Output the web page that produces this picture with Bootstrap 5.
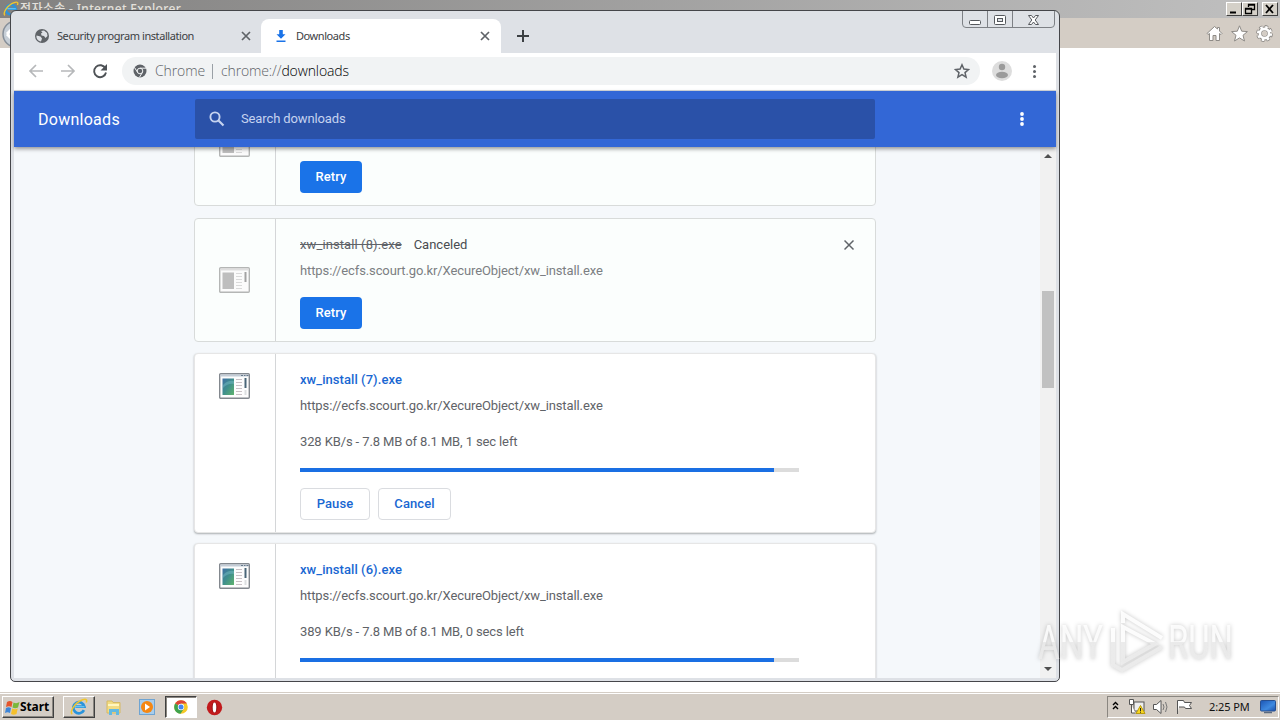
<!DOCTYPE html>
<html lang="en">
<head>
    <meta charset="UTF-8">
    <meta name="viewport" content="width=device-width, initial-scale=1.0">
    <title>Downloads</title>
    <link rel="stylesheet" href="https://cdn.jsdelivr.net/npm/bootstrap@5.3.0/dist/css/bootstrap.min.css">
    <style>
        body { width: 1280px; height: 720px; overflow: hidden; background: #fff; font-family: Roboto, "Liberation Sans", sans-serif; font-size: 13px; line-height: 20px; }
        svg { display: block; flex: none; }
        .desktop { height: 720px; }

        /* Internet Explorer behind */
        .ie-title { height: 18px; background: linear-gradient(90deg, #828180, #c0c0c0); color: #e4e1dc; font: 500 12px/18px "Noto Sans", "Noto Sans CJK KR", sans-serif; padding: 0 2px 0 3px; }
        .ie-caption { letter-spacing: .35px; white-space: nowrap; margin-left: 1px; }
        .ie-tools { height: 30px; background: #d4cdc5; padding: 2px 7px 0 1px; }
        .classic-btns { padding-top: 2px; }
        .classic-btn { width: 16px; height: 14px; background: #d4d0c8; border: 1px solid; border-color: #fff #404040 #404040 #fff; }
        .ie-icons { padding-top: 3px; }

        /* Chrome window */
        .chrome-win { left: 10px; top: 10px; width: 1050px; height: 672px; background: #dee1e6; border: 1px solid #45464a; border-radius: 6px 6px 5px 5px; padding: 0 3px 3px; overflow: hidden; }
        .tab-strip { height: 42px; padding: 8px 0 0 7px; font: 11px/34px "Noto Sans", sans-serif; color: #3c4043; letter-spacing: -.43px; }
        .tab-item { width: 240px; height: 34px; padding: 0 11px 0 15px; }
        .tab-item.on { background: #fff; border-radius: 8px 8px 0 0; }
        .tab-left { padding: 0 10px 0 14px; }
        .tab-two { margin-left: 2px; }
        .tab-plus { margin-top: 10px; }
        .win-buttons { right: 1px; top: -1px; width: 93px; height: 18px; border: 1px solid #7d8085; border-radius: 0 0 4px 4px; }
        .win-buttons > span + span { border-left: 1px solid #7d8085; }
        .address-row { height: 38px; background: #fff; border-bottom: 1px solid #d5d8dc; padding: 4px 15px 0 14px; }
        .omnibox { width: 858px; height: 28px; margin-left: 14px; border-radius: 14px; background: #f1f3f4; padding: 0 10px 0 11px; font: 300 14px/26px "Open Sans", sans-serif; color: #5f6368; letter-spacing: -.12px; }
        .omni-split { width: 1px; height: 15px; background: #9aa0a6; margin: 0 8px 0 7px; }
        .profile-pic { margin-right: 21px; }
        .dl-header { height: 56px; background: #3367d6; color: #fff; box-shadow: 0 2px 4px rgba(0,0,0,.4); position: relative; z-index: 2; }
        .dl-header h1 { width: 181px; padding: 2px 0 0 24px; margin: 0; font-size: 16px; font-weight: 400; letter-spacing: .27px; line-height: 54px; }
        .dl-search { width: 680px; height: 40px; background: #2a51a8; border-radius: 2px; padding-left: 14px; color: #c5d3f0; letter-spacing: -.12px; }
        .dl-menu { margin-right: 30px; }
        .dl-page { height: 531px; background: #f5f8fb; overflow: hidden; }
        .dl-list { width: 682px; margin: -65px 0 0 180px; }

        /* download entries */
        .dl-card { background: #fff; border: 1px solid #e6e6e6; border-radius: 4px; box-shadow: 0 1px 2px rgba(60,64,67,.4); margin-bottom: 11px; flex: none; }
        .dl-card.is-off { background: #fbfefd; border-color: #d8dbda; box-shadow: none; }
        .dl-card.gap-more { height: 124px; margin-bottom: 12px; }
        .dl-card.gap-less { margin-bottom: 10px; }
        .dl-card.last-one { height: 180px; }
        .dl-thumb { width: 81px; border-right: 1px solid #d4d6d8; padding: 19px 24px; }
        .dl-info { padding: 16px 20px 12px 24px; color: #5f6368; }
        .dl-name { font-weight: 500; color: #1967d2; letter-spacing: .06px; }
        .is-off .dl-name { font-weight: 400; color: #5f6368; text-decoration: line-through; letter-spacing: .1px; }
        .dl-state { color: #494c50; margin-left: 12px; }
        .dl-url { margin-top: 6px; letter-spacing: -.11px; }
        .is-off .dl-url { color: #7b7f83; }
        .dl-speed { margin-top: 16px; letter-spacing: -.12px; }
        .dl-info .progress { width: 499px; height: 4px; margin-top: 16px; border-radius: 0; background: #dcdcdc; }
        .progress-bar { background: #1a6fe3; }
        .dl-btns { margin-top: 16px; }
        .dl-btns .btn { height: 32px; padding: 0; font-size: 13px; font-weight: 500; line-height: 30px; border-radius: 4px; letter-spacing: .1px; }
        .btn-retry { width: 62px; background: #1a73e8; color: #fff; }
        .btn-pause { width: 70px; border-color: #dadce0; color: #1967d2; }
        .btn-stop { width: 73px; border-color: #dadce0; color: #1967d2; }
        .scroll-track { width: 16px; background: #f1f1f1; padding: 6px 0; }
        .scroll-thumb { width: 12px; height: 97px; margin-top: 132px; background: #c1c1c1; }

        /* taskbar */
        .task-bar { left: 0; top: 692px; width: 1280px; height: 28px; background: #d4cdc5; border-top: 1px solid #d4cdc5; box-shadow: inset 0 1px #fff; padding: 3px 1px 2px 2px; }
        .start-btn, .task-btn { height: 22px; border: 1px solid; border-color: #fff #404040 #404040 #fff; box-shadow: inset -1px -1px #8a8680; }
        .start-btn { width: 52px; font: 700 12px/20px "Noto Sans", sans-serif; color: #000; padding-left: 2px; letter-spacing: -.1px; }
        .task-btn { width: 32px; }
        .task-btn.first-task { margin-left: 9px; }
        .task-btn.on { background: #fff; border-color: #404040 #fff #fff #404040; box-shadow: inset 1px 1px #8a8680; }
        .quick-icons { margin: 0 10px 0 9px; gap: 15px; }
        .opera-icon { margin-left: 9px; }
        .tray { width: 172px; height: 22px; border: 1px solid; border-color: #8a8680 #fff #fff #8a8680; font: 11px/20px "Noto Sans", sans-serif; letter-spacing: -.1px; color: #111; }
        .clock-text { margin-left: 9px; }
        .tray-screen { margin-right: 2px; }
        .water-mark { left: 1030px; top: 604px; filter: drop-shadow(0 0 2px rgba(0,0,0,.25)); }
    </style>
</head>
<body>
    <svg width="0" height="0" class="position-absolute">
        <defs>
            <linearGradient id="gPic" x1="0" y1="0" x2="1" y2="1"><stop offset="0" stop-color="#3f6fa5"/><stop offset=".5" stop-color="#3f8f8c"/><stop offset="1" stop-color="#5fb36c"/></linearGradient>
            <linearGradient id="gScreen" x1="0" y1="0" x2="1" y2="1"><stop offset="0" stop-color="#1b55b5"/><stop offset=".6" stop-color="#3f8ae0"/><stop offset="1" stop-color="#1c4fa8"/></linearGradient>
            <linearGradient id="gMark" gradientUnits="userSpaceOnUse" x1="0" y1="0" x2="0" y2="76"><stop offset=".5" stop-color="#fff"/><stop offset=".5" stop-color="#ececec"/></linearGradient>
        </defs>
        <symbol id="exe" viewBox="0 0 31 26">
            <rect x=".7" y=".7" width="29.6" height="24.6" rx="1" fill="#fdfdfd" stroke="#83888e" stroke-width="1.4"/>
            <path d="M1.400 2.500H29.600" stroke="#c3ccd6" stroke-width="2"/>
            <path d="M22 2.500h2m1 0h1.500m1 0h2" stroke="#66798c"/>
            <rect x="3.500" y="5.500" width="11.500" height="16.500" fill="url(#gPic)"/>
            <path d="M4 12q5-5 11-4v3q-6-1-11 4z" fill="#75b9c4" opacity=".5"/>
            <path d="M17 6.500h6M17 9.500h6M17 12.500h6M17 15.500h6M17 18.500h6M17 21.500h6" stroke="#c9c1c5"/>
            <path d="M26.500 5v10" stroke="#4a6678" stroke-width="2"/>
            <path d="M26.500 17v5" stroke="#dcdfe0" stroke-width="2"/>
        </symbol>
        <symbol id="exeOff" viewBox="0 0 31 26">
            <rect x=".7" y=".7" width="29.6" height="24.6" rx="1" fill="#fbfbfb" stroke="#b4b6b5" stroke-width="1.4"/>
            <path d="M1.400 2.500H29.600" stroke="#dedede" stroke-width="2"/>
            <rect x="3.500" y="5.500" width="11.500" height="16.500" fill="#bebebe"/>
            <path d="M17 6.500h6M17 9.500h6M17 12.500h6M17 15.500h6M17 18.500h6M17 21.500h6" stroke="#dadada"/>
            <path d="M26.500 5v10" stroke="#a3a3a3" stroke-width="2"/>
        </symbol>
        <symbol id="cross" viewBox="0 0 10 10"><path d="M1 1l8 8M9 1L1 9" stroke="#5f6368" stroke-width="1.700"/></symbol>
        <symbol id="ie" viewBox="0 0 20 20">
            <path d="M15.500 13.500A6.200 6.200 0 1 1 16 9.600H6" fill="none" stroke="#2a94dc" stroke-width="3"/>
            <path d="M5.500 9.600H16" stroke="#66c4f2" stroke-width="1.500"/>
            <path d="M2.500 18C-1 16 5 5 14 2c5-1.600 5 1 4 3" fill="none" stroke="#f0c62e" stroke-width="1.700"/>
        </symbol>
    </svg>

    <div class="desktop position-relative overflow-hidden">
        <div class="ie-title d-flex justify-content-between">
            <div class="d-flex align-items-center">
                <svg width="16" height="16"><use href="#ie"/></svg>
                <span class="ie-caption">전자소송 - Internet Explorer</span>
            </div>
            <div class="classic-btns d-flex">
                <span class="classic-btn"><svg width="14" height="12"><path d="M3 9.500h6" stroke="#000" stroke-width="2"/></svg></span>
                <span class="classic-btn"><svg width="14" height="12"><path d="M5.500 4V1.500h6v5H9M5 2h7M2.500 5.500h6v5h-6zM2 6h7" fill="none" stroke="#000" stroke-width="1.300"/></svg></span>
                <span class="classic-btn ms-1"><svg width="14" height="12"><path d="M3 2l7 8M10 2L3 10" stroke="#000" stroke-width="1.800"/></svg></span>
            </div>
        </div>
        <div class="ie-tools d-flex justify-content-between">
            <svg width="28" height="28"><circle cx="15" cy="14" r="13" fill="#c6ced6" stroke="#87909a" stroke-width="1.500"/><path d="M6 14l6-6M6 14l6 6" stroke="#fff" stroke-width="3"/></svg>
            <div class="ie-icons d-flex gap-2">
                <svg width="17" height="24" viewBox="0 -2 17 24"><path d="M8.500 1.500L1 8.500l1 1 1.500-1V15.500h3.500V10.500h3v5h3.500V8.500l1.500 1 1-1-2.500-2.500V2.500h-2V4z" fill="#fff" stroke="#8e8b87"/></svg>
                <svg width="17" height="24" viewBox="0 -2 17 24"><path d="M8.500 .8l2.200 5.400 5.700.4-4.400 3.700 1.500 5.700-5-3.100-5 3.100L5 10.300.6 6.600l5.700-.4z" fill="#fff" stroke="#8e8b87"/></svg>
                <svg width="17" height="24" viewBox="0 -2 17 24"><circle cx="8.500" cy="8.500" r="6.600" fill="none" stroke="#8e8b87" stroke-width="3.600" stroke-dasharray="3.180 2"/><circle cx="8.500" cy="8.500" r="4.800" fill="none" stroke="#8e8b87" stroke-width="4.200"/><circle cx="8.500" cy="8.500" r="6.300" fill="none" stroke="#fff" stroke-width="2.500" stroke-dasharray="2.400 2.548"/><circle cx="8.500" cy="8.500" r="4.600" fill="none" stroke="#fff" stroke-width="2.600"/></svg>
            </div>
        </div>

        <div class="chrome-win position-absolute">
            <div class="tab-strip d-flex position-relative">
                <div class="tab-item tab-left d-flex align-items-center">
                    <svg width="14" height="14" viewBox="0 0 14 14" class="me-2"><circle cx="7" cy="7" r="7" fill="#5f6368"/><path d="M1.500 6.500l4 1 1.500 2-1 3C3 12 1 9.500 1.500 6.500zM6 2l3-.5 3 2.500.5 3-2 2-1.500-2-2.500-.5L6 4.500l1.500-1z" fill="#dee1e6"/></svg>
                    <span class="tab-one">Security program installation</span>
                    <svg width="10" height="10" class="ms-auto"><use href="#cross"/></svg>
                </div>
                <div class="tab-item on d-flex align-items-center">
                    <svg width="10" height="13" viewBox="0 0 10 13" class="me-2"><path d="M3.200 0h3.600v4.200H9.500L5 8.800.5 4.200h2.700zM.5 10.500h9v1.600h-9z" fill="#1a73e8"/></svg>
                    <span class="tab-two">Downloads</span>
                    <svg width="10" height="10" class="ms-auto"><use href="#cross"/></svg>
                </div>
                <svg width="12" height="14" class="tab-plus ms-3"><path d="M0 7h12M6 1v12" stroke="#3c4043" stroke-width="2"/></svg>
                <div class="win-buttons position-absolute d-flex">
                    <span><svg width="24" height="16"><rect x="6.500" y="9.500" width="11" height="4" rx="1" fill="#fff" stroke="#55585d"/></svg></span>
                    <span><svg width="24" height="16"><rect x="6.500" y="4.500" width="11" height="9" rx="1" fill="#fff" stroke="#55585d"/><rect x="9.500" y="7.500" width="5" height="3" fill="#dee1e6" stroke="#55585d"/></svg></span>
                    <span><svg width="41" height="16"><path d="M15.500 4.500h3l2 2.500 2-2.500h3l-3.300 4.500 3.300 4.500h-3l-2-2.500-2 2.500h-3L18.800 9z" fill="#fff" stroke="#55585d"/></svg></span>
                </div>
            </div>
            <div class="address-row d-flex">
                <svg width="80" height="28" viewBox="0 -6 80 28"><path d="M15 8H2.500M8 2L2 8l6 6M33 8h12.500M40 2l6 6-6 6" fill="none" stroke="#b6b8ba" stroke-width="1.700"/><path d="M77.500 5.500A6 6 0 1 0 78 9.500" fill="none" stroke="#4e5256" stroke-width="1.900"/><path d="M79 1v6.500h-6.500z" fill="#4e5256"/></svg>
                <div class="omnibox d-flex align-items-center">
                    <svg width="14" height="14" viewBox="0 0 14 14" class="me-2"><circle cx="7" cy="7" r="6.500" fill="#5f6368"/><circle cx="7" cy="7" r="2.800" fill="#5f6368" stroke="#f1f3f4"/><path d="M7 4.200h6M4.600 8.400L1.500 3.500M9.400 8.400l-3 5" stroke="#f1f3f4"/></svg>
                    <span class="omni-text">Chrome</span>
                    <span class="omni-split"></span>
                    <span class="omni-text">chrome://<span class="text-black">downloads</span></span>
                    <svg width="16" height="16" viewBox="0 0 16 16" class="ms-auto"><path d="M8 1.800l1.900 4.300 4.600.4-3.500 3.100 1.100 4.600L8 11.700l-4.100 2.500L5 9.600 1.500 6.500l4.600-.4z" fill="none" stroke="#5f6368" stroke-width="1.500"/></svg>
                </div>
                <svg width="20" height="28" viewBox="0 0 20 28" class="profile-pic ms-auto"><circle cx="10" cy="14" r="10" fill="#dddddd"/><circle cx="10" cy="10" r="3.200" fill="#9b9b9b"/><ellipse cx="10" cy="18" rx="6" ry="3.200" fill="#9b9b9b"/></svg>
                <svg width="4" height="28" class="me-1"><circle cx="1.500" cy="9.500" r="1.500" fill="#5f6368"/><circle cx="1.500" cy="14.500" r="1.500" fill="#5f6368"/><circle cx="1.500" cy="19.500" r="1.500" fill="#5f6368"/></svg>
            </div>
            <div class="dl-header d-flex align-items-center">
                <h1>Downloads</h1>
                <div class="dl-search d-flex align-items-center">
                    <svg width="16" height="16" viewBox="0 0 16 16"><circle cx="6" cy="6" r="4.600" fill="none" stroke="#c5d3f0" stroke-width="1.900"/><path d="M9.500 9.500l5 5" stroke="#c5d3f0" stroke-width="2.200"/></svg>
                    <span class="search-hint ms-3">Search downloads</span>
                </div>
                <svg width="6" height="16" class="dl-menu ms-auto"><circle cx="2" cy="3" r="1.900" fill="#fff"/><circle cx="2" cy="8" r="1.900" fill="#fff"/><circle cx="2" cy="13" r="1.900" fill="#fff"/></svg>
            </div>
            <div class="dl-page d-flex justify-content-between">
                <div class="dl-list d-flex flex-column">
                    <div class="dl-card is-off gap-more d-flex">
                        <div class="dl-thumb d-flex align-items-center"><svg width="31" height="26"><use href="#exeOff"/></svg></div>
                        <div class="dl-info flex-grow-1 d-flex align-items-end">
                            <div class="dl-btns d-flex"><button type="button" class="btn btn-retry">Retry</button></div>
                        </div>
                    </div>
                    <div class="dl-card is-off d-flex">
                        <div class="dl-thumb d-flex align-items-center"><svg width="31" height="26"><use href="#exeOff"/></svg></div>
                        <div class="dl-info flex-grow-1">
                            <div class="d-flex">
                                <span class="dl-name">xw_install (8).exe</span><span class="dl-state">Canceled</span>
                                <svg width="11" height="20" viewBox="0 0 11 20" class="ms-auto"><path d="M.5 5.500l9 9M9.500 5.500l-9 9" stroke="#5f6368" stroke-width="1.500"/></svg>
                            </div>
                            <div class="dl-url">https://ecfs.scourt.go.kr/XecureObject/xw_install.exe</div>
                            <div class="dl-btns d-flex"><button type="button" class="btn btn-retry">Retry</button></div>
                        </div>
                    </div>
                    <div class="dl-card gap-less d-flex">
                        <div class="dl-thumb"><svg width="31" height="26"><use href="#exe"/></svg></div>
                        <div class="dl-info flex-grow-1">
                            <div><span class="dl-name">xw_install (7).exe</span></div>
                            <div class="dl-url">https://ecfs.scourt.go.kr/XecureObject/xw_install.exe</div>
                            <div class="dl-speed">328 KB/s - 7.8 MB of 8.1 MB, 1 sec left</div>
                            <div class="progress"><div class="progress-bar" style="width:95%"></div></div>
                            <div class="dl-btns d-flex gap-2">
                                <button type="button" class="btn btn-pause">Pause</button>
                                <button type="button" class="btn btn-stop">Cancel</button>
                            </div>
                        </div>
                    </div>
                    <div class="dl-card last-one d-flex">
                        <div class="dl-thumb"><svg width="31" height="26"><use href="#exe"/></svg></div>
                        <div class="dl-info flex-grow-1">
                            <div><span class="dl-name">xw_install (6).exe</span></div>
                            <div class="dl-url">https://ecfs.scourt.go.kr/XecureObject/xw_install.exe</div>
                            <div class="dl-speed">389 KB/s - 7.8 MB of 8.1 MB, 0 secs left</div>
                            <div class="progress"><div class="progress-bar" style="width:95%"></div></div>
                        </div>
                    </div>
                </div>
                <div class="scroll-track d-flex flex-column align-items-center">
                    <svg width="8" height="6"><path d="M0 5l4-4 4 4z" fill="#505050"/></svg>
                    <div class="scroll-thumb"></div>
                    <svg width="8" height="6" class="mt-auto"><path d="M0 1l4 4 4-4z" fill="#505050"/></svg>
                </div>
            </div>
        </div>

        <svg class="water-mark position-absolute" width="220" height="76">
            <g fill="url(#gMark)" fill-opacity=".85" font-family="Roboto, Liberation Sans, sans-serif" font-size="48">
                <text x="8" y="55" textLength="65" lengthAdjust="spacingAndGlyphs">ANY</text>
                <text x="138" y="55" textLength="65" lengthAdjust="spacingAndGlyphs">RUN</text>
            </g>
            <path d="M93 23l32 17-32 18zM93 19V10l39 24M83 24v37l9 5 40-23" fill="none" stroke="url(#gMark)" stroke-opacity=".9" stroke-width="4"/>
        </svg>

        <div class="task-bar position-absolute d-flex align-items-center">
            <div class="start-btn d-flex align-items-center">
                <svg width="15" height="15" viewBox="0 0 15 15"><path d="M2 2q3-2 5.500 0L6.500 7Q4 5.500 1 7z" fill="#e5552c"/><path d="M8.500 2.500q3 1.500 6-.5L13 7.500q-3 1.500-5.500 0z" fill="#7ab83c"/><path d="M1 8q2.500-1.500 5 0L5 13q-2.500-1.500-5 0z" fill="#3d85d8"/><path d="M7.200 8.500q3 1.500 5.500 0L11.500 14q-3 1.500-5.500 0z" fill="#f5c02c"/></svg>
                <span class="start-text">Start</span>
            </div>
            <div class="task-btn first-task d-flex align-items-center justify-content-center"><svg width="18" height="18"><use href="#ie"/></svg></div>
            <div class="quick-icons d-flex">
                <svg width="20" height="18" viewBox="0 0 20 18"><path d="M3 3h5l1 1.500h7V15H3z" fill="#f2dc83" stroke="#d5b964"/><path d="M4 7h11" stroke="#fff6c0" stroke-width="2"/><path d="M5 17v-6h10v6h-3v-3H8v3z" fill="#62b9e2"/></svg>
                <svg width="16" height="18" viewBox="0 0 16 18"><rect x=".5" y="1.500" width="15" height="15" fill="#a8cdec" stroke="#6fa4d2"/><circle cx="8" cy="9" r="6" fill="#f58713"/><path d="M6 5.500l5 3.500-5 3.500z" fill="#fff"/></svg>
            </div>
            <div class="task-btn on d-flex align-items-center justify-content-center">
                <svg width="14" height="14" viewBox="0 0 14 14"><circle cx="7" cy="7" r="6.800" fill="#f6c927"/><path d="M7 7L1.100 3.600A6.800 6.800 0 0 1 12.900 3.600H7z" fill="#dc4437"/><path d="M7 7L1.100 3.600A6.800 6.800 0 0 0 6.500 13.800L10 8.500z" fill="#3fa34d"/><circle cx="7" cy="7" r="3.200" fill="#fff"/><circle cx="7" cy="7" r="2.500" fill="#4385f0"/></svg>
            </div>
            <svg width="17" height="17" viewBox="0 0 17 17" class="opera-icon"><circle cx="8.500" cy="8.500" r="7.700" fill="#c11a1c"/><ellipse cx="8.500" cy="8.500" rx="2.800" ry="5.300" fill="#8d0d10"/><ellipse cx="8.500" cy="8.500" rx="1.800" ry="5" fill="#fff"/></svg>
            <div class="tray ms-auto d-flex align-items-center">
                <svg width="92" height="20" viewBox="1 0 92 20">
                    <path d="M6 8l2.500-2.500L11 8M6 12l2.500-2.500L11 12" fill="none" stroke="#000" stroke-width="1.400"/>
                    <rect x="27" y="5" width="10" height="9" fill="#eee" stroke="#555"/><path d="M22.500 2.500h4v5h-4zM24.500 8v8h4" fill="#fff" stroke="#555"/><path d="M33.500 8.500l4.500 8h-9z" fill="#f7d51e" stroke="#b99b10"/><path d="M33.500 11v3m0 .7v1" stroke="#222"/>
                    <path d="M46.500 7.500h3l4.500-4v13l-4.500-4h-3z" fill="#fff" stroke="#555"/><path d="M56 7q2 3 0 6M58.500 5q3 5 0 10" fill="none" stroke="#777"/>
                    <path d="M70.500 17V3.500h6l1 2h7l-2 3 2 3h-6l-1-1.500h-5.500" fill="#fff" stroke="#555"/>
                </svg>
                <span class="clock-text">2:25 PM</span>
                <svg width="16" height="14" viewBox="0 0 16 14" class="tray-screen ms-auto"><rect x=".5" y=".5" width="15" height="10.500" rx="1" fill="url(#gScreen)" stroke="#274f90"/><path d="M4 12.500h8" stroke="#5a6a80" stroke-width="1.500"/></svg>
            </div>
        </div>
    </div>
    <script src="https://cdn.jsdelivr.net/npm/bootstrap@5.3.0/dist/js/bootstrap.bundle.min.js"></script>
</body>
</html>
